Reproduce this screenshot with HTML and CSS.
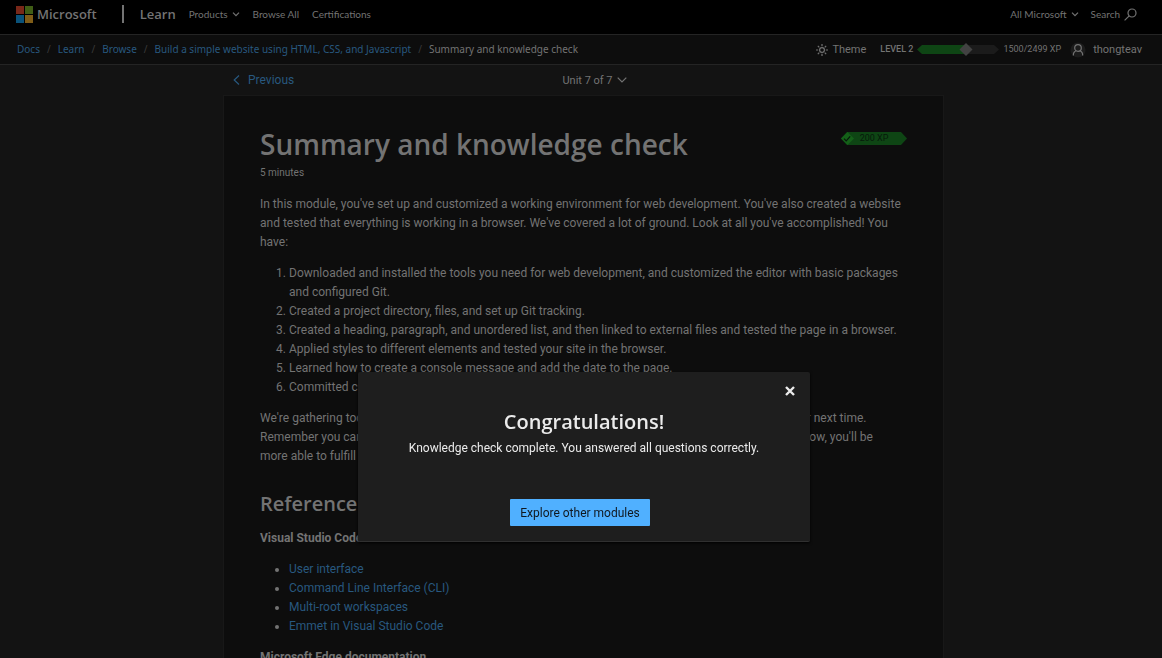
FILE: index.html
```html
<!DOCTYPE html>
<html lang="en">
<head>
<meta charset="utf-8">
<title>Summary and knowledge check - Learn</title>
<link rel="stylesheet" href="styles.css">
</head>
<body>
<header class="topbar">
  <a class="brand" href="#">
    <svg width="17" height="17" viewBox="0 0 17 17" aria-hidden="true"><path fill="#792819" d="M0 0h8v8H0z"/><path fill="#405e16" d="M9 0h8v8H9z"/><path fill="#0a527a" d="M0 9h8v8H0z"/><path fill="#805d18" d="M9 9h8v8H9z"/></svg>
    <span class="brand-name">Microsoft</span>
  </a>
  <span class="divider"></span>
  <a class="site" href="#">Learn</a>
  <nav class="topnav">
    <button class="plain" type="button">Products <svg width="8" height="5" viewBox="0 0 8 5"><path class="stroke" d="M1 .7l3 3 3-3"/></svg></button>
    <a href="#">Browse All</a>
    <a href="#">Certifications</a>
  </nav>
  <div class="topnav end">
    <button class="plain" type="button">All Microsoft <svg width="8" height="5" viewBox="0 0 8 5"><path class="stroke" d="M1 .7l3 3 3-3"/></svg></button>
    <button class="plain search" type="button">Search <svg width="13" height="13" viewBox="0 0 13 13"><circle class="stroke" cx="8" cy="5" r="4"/><path class="stroke" d="M5.2 7.9L.6 12.4"/></svg></button>
  </div>
</header>
<div class="subbar">
  <nav class="crumbs" aria-label="Breadcrumb">
    <a href="#">Docs</a><span class="sep">/</span>
    <a href="#">Learn</a><span class="sep">/</span>
    <a href="#">Browse</a><span class="sep">/</span>
    <a href="#">Build a simple website using HTML, CSS, and Javascript</a><span class="sep">/</span>
    <span>Summary and knowledge check</span>
  </nav>
  <div class="account">
    <button class="plain theme" type="button"><svg width="12" height="12" viewBox="0 0 12 12"><circle class="stroke" cx="6" cy="6" r="2.4"/><path class="stroke" d="M6 0v2.2M6 9.8V12M0 6h2.2M9.8 6H12M1.8 1.8l1.5 1.5M8.7 8.7l1.5 1.5M1.8 10.2l1.5-1.5M8.7 3.3l1.5-1.5"/></svg>Theme</button>
    <span class="level">LEVEL 2</span>
    <svg class="meter" width="82" height="13" viewBox="0 0 82 13" role="img" aria-label="1500 of 2499 XP"><path fill="#1b1b1b" d="M5 2h72l5 4.500-5 4.500H5z"/><path fill="#0e4514" d="M5 2h44v9H5L0 6.500z"/><path fill="#424242" d="M49 0l6.500 6.500L49 13l-6.500-6.500z"/></svg>
    <span class="xp">1500/2499 XP</span>
    <svg class="avatar" width="16" height="16" viewBox="0 0 16 16"><circle cx="8" cy="8" r="7.500" fill="#1b1b1b"/><circle class="stroke" cx="8" cy="6" r="3.300"/><path class="stroke" d="M3.300 13.500c0-2.700 1.400-4.200 3-4.700M12.700 13.500c0-2.700-1.400-4.200-3-4.700"/></svg>
    <a class="user" href="#">thongteav</a>
  </div>
</div>
<div class="page">
  <nav class="unitnav">
    <a class="previous" href="#"><svg width="7" height="10" viewBox="0 0 7 10"><path class="stroke" d="M6 .5L1.200 5 6 9.500"/></svg>Previous</a>
    <button class="plain unit" type="button">Unit 7 of 7 <svg width="10" height="6" viewBox="0 0 10 6"><path class="stroke" d="M.7.700L5 5 9.300.7"/></svg></button>
  </nav>
  <main class="card">
    <div class="heading">
      <h1>Summary and knowledge check</h1>
      <div class="badge">
        <svg width="66" height="13" viewBox="0 0 66 13" aria-hidden="true"><path fill="#0e4514" d="M6 0h54l6 6.500-6 6.500H6L0 6.500z"/><path fill="#146018" d="M6.500 0L13 6.500 6.500 13 0 6.500z"/><path fill="none" stroke="#06190a" stroke-width="1.200" d="M3 6.700l2.200 2.200 4-4.600"/></svg>
        <span class="badge-text">200 XP</span>
      </div>
    </div>
    <p class="time">5 minutes</p>
    <p>In this module, you've set up and customized a working environment for web development. You've also created a website and tested that everything is working in a browser. We've covered a lot of ground. Look at all you've accomplished! You have:</p>
    <ol>
      <li>Downloaded and installed the tools you need for web development, and customized the editor with basic packages and configured Git.</li>
      <li>Created a project directory, files, and set up Git tracking.</li>
      <li>Created a heading, paragraph, and unordered list, and then linked to external files and tested the page in a browser.</li>
      <li>Applied styles to different elements and tested your site in the browser.</li>
      <li>Learned how to create a console message and add the date to the page.</li>
      <li>Committed changes to Git.</li>
    </ol>
    <p>We're gathering tooling and skills as we go. You can re-use everything you've put together so far for your next time.<br>Remember you can always come back to any of the units and practice them again. As your web skills grow, you'll be<br>more able to fulfill your goals.</p>
    <h2>Reference</h2>
    <h3>Visual Studio Code documentation</h3>
    <ul>
      <li><a href="#">User interface</a></li>
      <li><a href="#">Command Line Interface (CLI)</a></li>
      <li><a href="#">Multi-root workspaces</a></li>
      <li><a href="#">Emmet in Visual Studio Code</a></li>
    </ul>
    <h3>Microsoft Edge documentation</h3>
  </main>
</div>
<div class="layer">
  <section class="modal" role="dialog" aria-modal="true" aria-labelledby="modal-title">
    <button class="close" type="button" aria-label="Close"><svg width="10" height="10" viewBox="0 0 10 10"><path fill="none" stroke="#ebebeb" stroke-width="2.400" d="M1 1l8 8M9 1L1 9"/></svg></button>
    <h2 class="modal-title" id="modal-title">Congratulations!</h2>
    <p class="modal-text">Knowledge check complete. You answered all questions correctly.</p>
    <button class="explore" type="button">Explore other modules</button>
  </section>
</div>
</body>
</html>
```
FILE: styles.css
```css
* { box-sizing: border-box; }

html { height: 100%; overflow: hidden; background: #131313; }

body {
  height: 100%;
  margin: 0;
  overflow: hidden;
  background: #131313;
  color: #737373;
  font: 12px/19px Roboto, "Noto Sans", sans-serif;
}

a { color: #28587f; text-decoration: none; }
svg { flex: none; }
.stroke { fill: none; stroke: currentColor; stroke-width: 1.2; }

.plain {
  display: inline-flex;
  align-items: center;
  gap: 6px;
  padding: 0;
  border: 0;
  background: none;
  color: inherit;
  font: inherit;
  white-space: nowrap;
}

.topbar {
  display: flex;
  align-items: center;
  height: 35px;
  padding: 0 25px 6px 16px;
  border-bottom: 1px solid #242424;
  background: #000;
  white-space: nowrap;
}
.topbar a { color: #737373; }
.brand { display: flex; align-items: center; gap: 4px; }
.brand-name { font: 600 13px/18px "Open Sans", sans-serif; }
.divider { width: 2px; height: 18px; margin: 0 16px 0 25px; background: #737373; }
.topbar .site { font: 600 13px/18px "Open Sans", sans-serif; }
.topnav {
  display: flex;
  align-items: center;
  gap: 13px;
  margin-left: 13px;
  font-family: Lato, sans-serif;
  font-size: 10px;
}
.topnav .plain { gap: 4px; }
.end { gap: 12px; margin-left: auto; }

.subbar {
  display: flex;
  justify-content: space-between;
  align-items: center;
  height: 30px;
  padding: 0 20px 0 17px;
  border-bottom: 1px solid #242424;
  background: #0d0d0d;
  font-size: 11px;
  white-space: nowrap;
}
.crumbs { display: flex; font-family: "Noto Sans", sans-serif; font-size: 10px; }
.sep { margin: 0 7px; color: #3a3a3a; }
.account { display: flex; align-items: center; }
.theme { gap: 4px; }
.level { margin: 0 4px 0 14px; font-size: 9px; font-weight: 500; }
.xp { margin: 0 9px 0 4px; font-size: 9px; }
.user { margin-left: 7px; }
.account .user { color: #737373; }

.page { width: 100%; max-width: 726px; margin: 0 auto; padding-left: 5px; }
.unitnav {
  display: grid;
  grid-template-columns: 1fr auto 1fr;
  align-items: center;
  height: 30px;
  padding-left: 10px;
  font-size: 12px;
}
.previous { display: flex; align-items: center; gap: 8px; }
.unit { padding-left: 12px; font-size: 11px; }
.unit { gap: 4px; }

.card {
  padding: 29px 36px;
  border: 1px solid #181818;
  background: #0d0d0d;
}
.heading { display: flex; justify-content: space-between; align-items: flex-start; }
h1 { margin: 0; font: 600 28px/38px "Open Sans", sans-serif; }
.badge { position: relative; display: flex; margin-top: 7px; }
.badge-text {
  position: absolute;
  inset: 0;
  color: #06190a;
  font-size: 9px;
  line-height: 13px;
  text-align: center;
}
p { margin: 0 0 12px; }
.time { font-size: 10px; line-height: 20px; }
ol, ul { margin: 0 0 12px; padding-left: 29px; }
h2 { margin: 0; padding-top: 10px; font: 600 20px/32px "Open Sans", sans-serif; }
h3 { margin: 9px 0 12px; font: 700 12px/19px Roboto, sans-serif; }

.layer {
  position: fixed;
  inset: 0;
  display: flex;
  justify-content: center;
  align-items: flex-start;
  padding: 372px 0 0 6px;
}
.modal {
  position: relative;
  display: flex;
  flex-direction: column;
  align-items: center;
  width: 452px;
  padding: 34px 16px 15px;
  border-bottom: 1px solid #303030;
  border-radius: 2px;
  background: #1e1e1e;
  box-shadow: 0 1px 3px #000;
  color: #ebebeb;
}
.close {
  position: absolute;
  top: 10px;
  right: 11px;
  display: flex;
  padding: 4px;
  border: 0;
  background: none;
}
.modal-title { padding: 0; }
.modal-text { margin: 0 0 40px; line-height: 21px; }
.explore {
  margin-right: 8px;
  padding: 5px 10px 3px;
  border: 0;
  border-radius: 1px;
  background: #50b0ff;
  color: #101820;
  font: 12px/19px Roboto, sans-serif;
}
```
